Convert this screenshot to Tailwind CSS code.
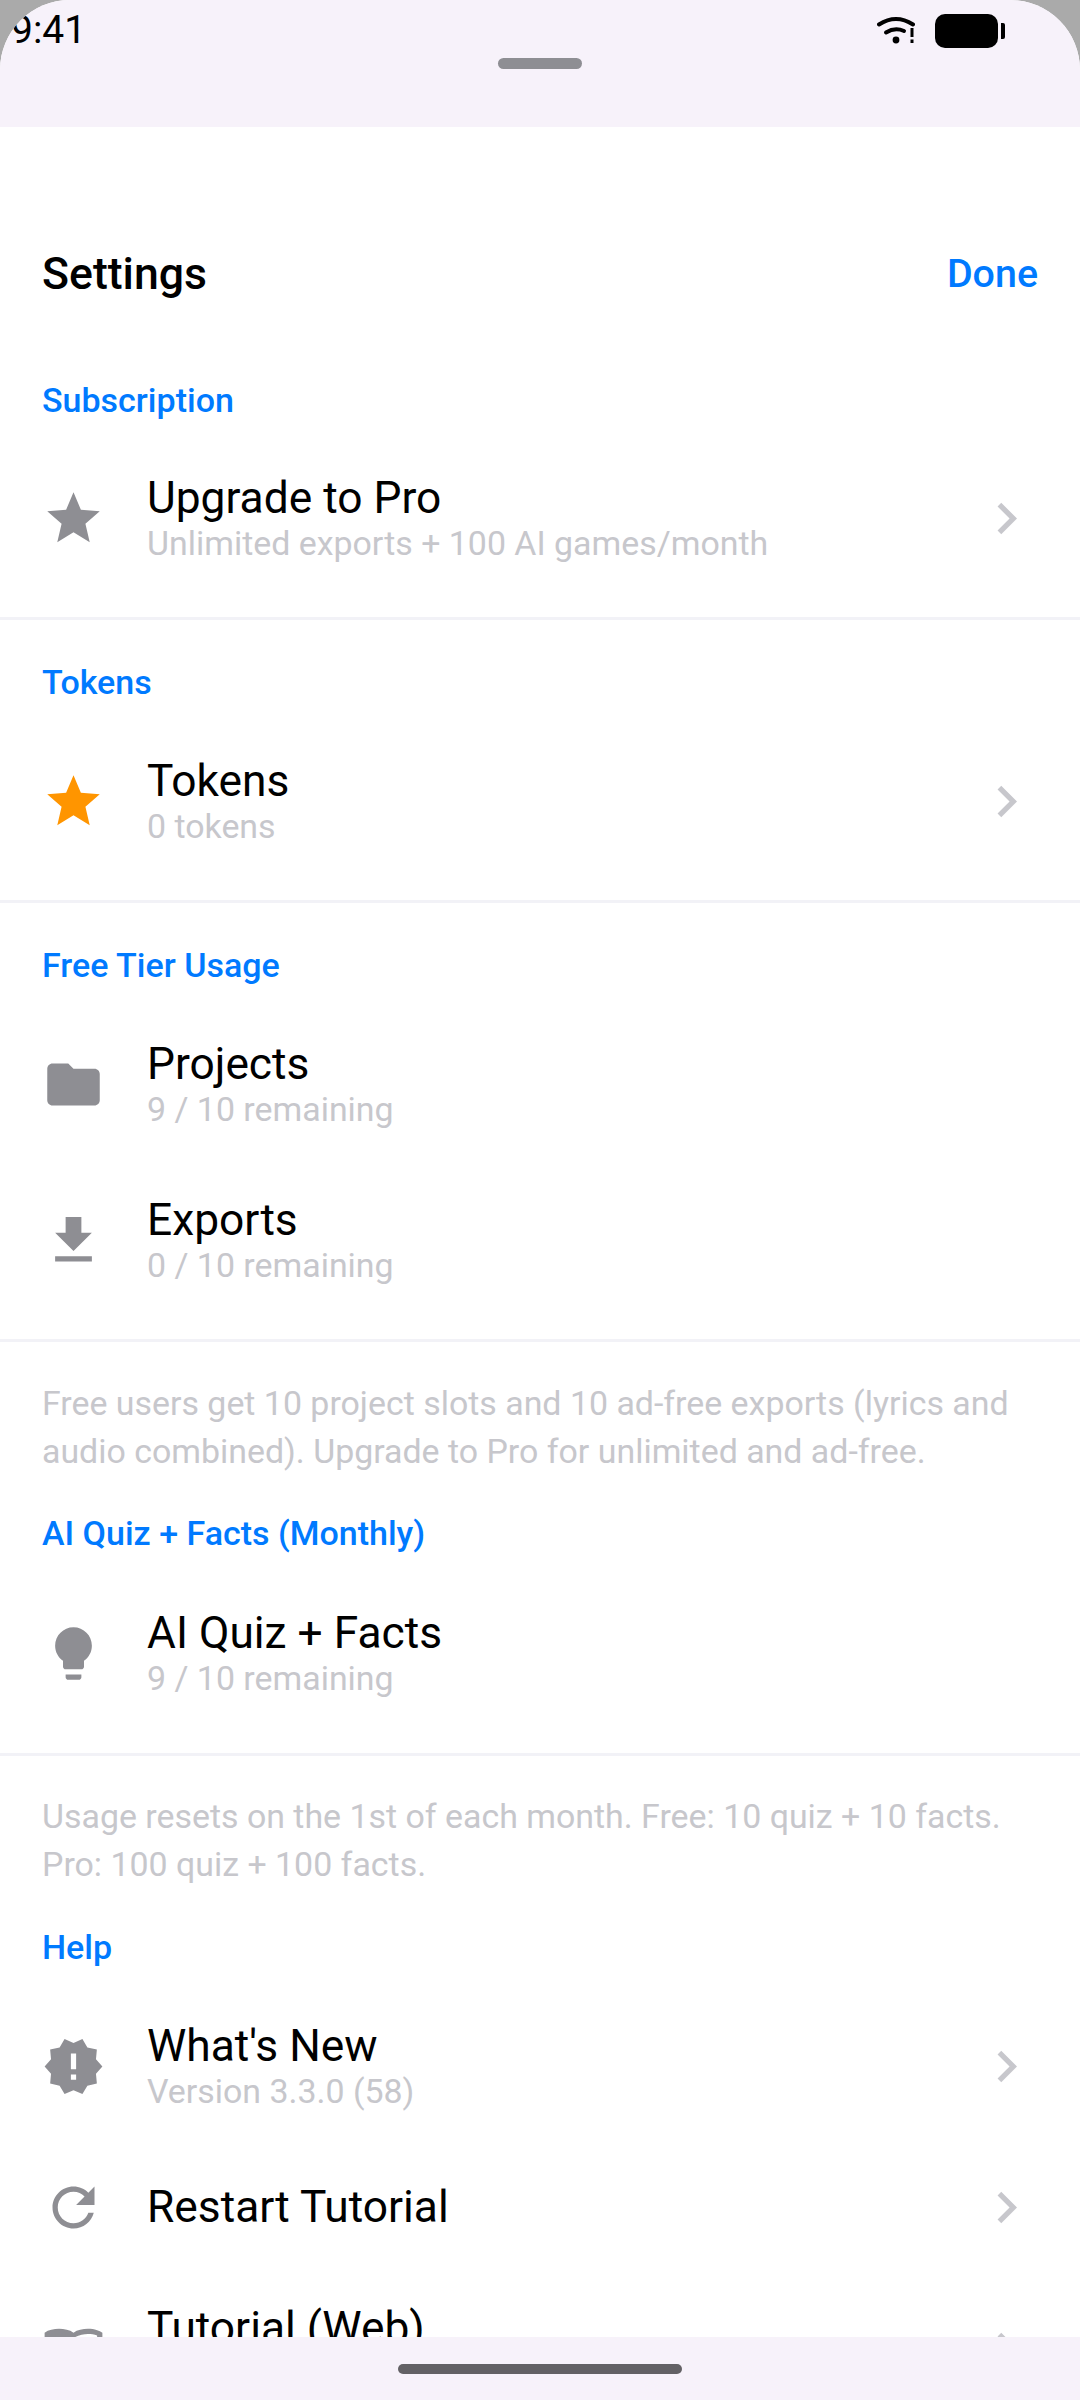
<!DOCTYPE html>
<html lang="en">
<head>
    <meta charset="UTF-8">
    <meta name="viewport" content="width=device-width, initial-scale=1.0">
    <title>Settings</title>
    <script src="https://cdn.jsdelivr.net/npm/@tailwindcss/browser@4"></script>
</head>
<body class="bg-[#aaaaaa] font-['Roboto',sans-serif]">
    <div class="h-[2400px] w-[1080px] flex flex-col overflow-hidden rounded-t-[70px] bg-white">
        <!-- Status bar + sheet handle -->
        <div class="relative h-[127px] shrink-0 bg-[#f7f2fa]">
            <div class="flex items-start justify-between pl-[11px] pr-[75px] pt-[8px]">
                <span class="text-[39px] leading-[44px] text-black">9:41</span>
                <div class="flex items-start gap-[20px] pt-[6px]">
                    <svg class="mt-[1px] w-[38px] h-[30px]" viewBox="0 0 38 30" fill="none">
                        <path d="M2 9.5Q19 -1.5 36 9.5" stroke="#000" stroke-width="4" stroke-linecap="round"/>
                        <path d="M9 17.5Q18 12 27 16" stroke="#000" stroke-width="4" stroke-linecap="round"/>
                        <circle cx="19" cy="25" r="3.4" fill="#000"/>
                        <rect x="33.5" y="13" width="3" height="9" fill="#000"/>
                        <rect x="33.5" y="24.5" width="3" height="3.5" fill="#000"/>
                    </svg>
                    <div class="flex items-center gap-[3px]">
                        <div class="w-[63px] h-[34px] rounded-[10px] bg-black"></div>
                        <div class="w-[4px] h-[16px] rounded-r-[2px] bg-black"></div>
                    </div>
                </div>
            </div>
            <div class="absolute left-[498px] top-[58px] w-[84px] h-[11px] rounded-full bg-[#8e8e93]"></div>
        </div>

        <!-- Scroll content -->
        <div class="flex-1 overflow-hidden bg-white">
            <div class="flex items-center justify-between px-[42px] pt-[122px] pb-[80px]">
                <h1 class="text-[44.6px] leading-[50px] font-medium text-black">Settings</h1>
                <button class="text-[39.4px] leading-[50px] font-medium text-[#007aff]">Done</button>
            </div>

            <!-- Subscription -->
            <div class="px-[42px] h-[42px] mb-[19px] text-[34px] leading-[42px] font-medium text-[#007aff]">Subscription</div>
            <div class="h-[156px] flex items-center pl-[42px] pr-[42px]">
                <svg class="w-[63px] h-[63px] shrink-0 fill-[#8e8e93]" viewBox="0 0 24 24"><path d="M12 17.27L18.18 21l-1.64-7.03L22 9.24l-7.19-.61L12 2 9.19 8.63 2 9.24l5.46 4.73L5.82 21z"/></svg>
                <div class="flex-1 ml-[42px]">
                    <div class="text-[44.3px] leading-[52px] text-black">Upgrade to Pro</div>
                    <div class="text-[33.9px] leading-[40px] text-[#c7c7cc]">Unlimited exports + 100 AI games/month</div>
                </div>
                <svg class="w-[63px] h-[63px] shrink-0 fill-[#c7c7cc]" viewBox="0 0 24 24"><path d="M10 6L8.59 7.41 13.17 12l-4.58 4.59L10 18l6-6z"/></svg>
            </div>
            <div class="mt-[21px] h-[3px] bg-[#f2f2f7]"></div>

            <!-- Tokens -->
            <div class="px-[42px] mt-[41px] h-[42px] mb-[20px] text-[34px] leading-[42px] font-medium text-[#007aff]">Tokens</div>
            <div class="h-[156px] flex items-center pl-[42px] pr-[42px]">
                <svg class="w-[63px] h-[63px] shrink-0 fill-[#ff9500]" viewBox="0 0 24 24"><path d="M12 17.27L18.18 21l-1.64-7.03L22 9.24l-7.19-.61L12 2 9.19 8.63 2 9.24l5.46 4.73L5.82 21z"/></svg>
                <div class="flex-1 ml-[42px]">
                    <div class="text-[44.3px] leading-[52px] text-black">Tokens</div>
                    <div class="text-[33.9px] leading-[40px] text-[#c7c7cc]">0 tokens</div>
                </div>
                <svg class="w-[63px] h-[63px] shrink-0 fill-[#c7c7cc]" viewBox="0 0 24 24"><path d="M10 6L8.59 7.41 13.17 12l-4.58 4.59L10 18l6-6z"/></svg>
            </div>
            <div class="mt-[21px] h-[3px] bg-[#f2f2f7]"></div>

            <!-- Free Tier Usage -->
            <div class="px-[42px] mt-[41px] h-[42px] mb-[20px] text-[34px] leading-[42px] font-medium text-[#007aff]">Free Tier Usage</div>
            <div class="h-[156px] flex items-center pl-[42px] pr-[42px]">
                <svg class="w-[63px] h-[63px] shrink-0 fill-[#8e8e93]" viewBox="0 0 24 24"><path d="M10 4H4c-1.1 0-1.99.9-1.99 2L2 18c0 1.1.9 2 2 2h16c1.1 0 2-.9 2-2V8c0-1.1-.9-2-2-2h-8l-2-2z"/></svg>
                <div class="flex-1 ml-[42px]">
                    <div class="text-[44.3px] leading-[52px] text-black">Projects</div>
                    <div class="text-[33.9px] leading-[40px] text-[#c7c7cc]">9 / 10 remaining</div>
                </div>
            </div>
            <div class="h-[156px] flex items-center pl-[42px] pr-[42px]">
                <svg class="w-[63px] h-[63px] shrink-0 fill-[#8e8e93]" viewBox="0 0 24 24"><path d="M19 9h-4V3H9v6H5l7 7 7-7zM5 18v2h14v-2H5z"/></svg>
                <div class="flex-1 ml-[42px]">
                    <div class="text-[44.3px] leading-[52px] text-black">Exports</div>
                    <div class="text-[33.9px] leading-[40px] text-[#c7c7cc]">0 / 10 remaining</div>
                </div>
            </div>
            <div class="mt-[21px] h-[3px] bg-[#f2f2f7]"></div>
            <p class="px-[42px] pt-[38px] text-[33.9px] leading-[48px] text-[#c7c7cc]">Free users get 10 project slots and 10 ad-free exports (lyrics and audio combined). Upgrade to Pro for unlimited and ad-free.</p>

            <!-- AI Quiz + Facts -->
            <div class="px-[42px] mt-[36px] h-[42px] mb-[21px] text-[34px] leading-[42px] font-medium text-[#007aff]">AI Quiz + Facts (Monthly)</div>
            <div class="h-[156px] flex items-center pl-[42px] pr-[42px]">
                <svg class="w-[63px] h-[63px] shrink-0 fill-[#8e8e93]" viewBox="0 0 24 24"><path d="M9 21c0 .55.45 1 1 1h4c.55 0 1-.45 1-1v-1H9v1zm3-19C8.14 2 5 5.14 5 9c0 2.38 1.19 4.47 3 5.74V17c0 .55.45 1 1 1h6c.55 0 1-.45 1-1v-2.26c1.81-1.27 3-3.36 3-5.74 0-3.86-3.14-7-7-7z"/></svg>
                <div class="flex-1 ml-[42px]">
                    <div class="text-[44.3px] leading-[52px] text-black">AI Quiz + Facts</div>
                    <div class="text-[33.9px] leading-[40px] text-[#c7c7cc]">9 / 10 remaining</div>
                </div>
            </div>
            <div class="mt-[22px] h-[3px] bg-[#f2f2f7]"></div>
            <p class="px-[42px] pt-[37px] text-[33.9px] leading-[48px] text-[#c7c7cc]">Usage resets on the 1st of each month. Free: 10 quiz + 10 facts. Pro: 100 quiz + 100 facts.</p>

            <!-- Help -->
            <div class="px-[42px] mt-[37px] h-[42px] mb-[20px] text-[34px] leading-[42px] font-medium text-[#007aff]">Help</div>
            <div class="h-[156px] flex items-center pl-[42px] pr-[42px]">
                <svg class="w-[63px] h-[63px] shrink-0 fill-[#8e8e93]" viewBox="0 0 24 24"><path d="M23 12l-2.44-2.78.34-3.68-3.61-.82-1.89-3.18L12 3 8.6 1.54 6.71 4.72l-3.61.81.34 3.68L1 12l2.44 2.78-.34 3.69 3.61.82 1.89 3.18L12 21l3.4 1.47 1.89-3.18 3.61-.82-.34-3.68L23 12zm-10 5h-2v-2h2v2zm0-4h-2V7h2v6z"/></svg>
                <div class="flex-1 ml-[42px]">
                    <div class="text-[44.3px] leading-[52px] text-black">What's New</div>
                    <div class="text-[33.9px] leading-[40px] text-[#c7c7cc]">Version 3.3.0 (58)</div>
                </div>
                <svg class="w-[63px] h-[63px] shrink-0 fill-[#c7c7cc]" viewBox="0 0 24 24"><path d="M10 6L8.59 7.41 13.17 12l-4.58 4.59L10 18l6-6z"/></svg>
            </div>
            <div class="h-[126px] flex items-center pl-[42px] pr-[42px]">
                <svg class="w-[63px] h-[63px] shrink-0 fill-[#8e8e93]" viewBox="0 0 24 24"><path d="M17.65 6.35C16.2 4.9 14.21 4 12 4c-4.42 0-7.99 3.58-7.99 8s3.57 8 7.99 8c3.73 0 6.84-2.55 7.73-6h-2.08c-.82 2.33-3.04 4-5.65 4-3.31 0-6-2.69-6-6s2.69-6 6-6c1.66 0 3.14.69 4.22 1.78L13 11h7V4l-2.35 2.35z"/></svg>
                <div class="flex-1 ml-[42px] text-[44.3px] leading-[52px] text-black">Restart Tutorial</div>
                <svg class="w-[63px] h-[63px] shrink-0 fill-[#c7c7cc]" viewBox="0 0 24 24"><path d="M10 6L8.59 7.41 13.17 12l-4.58 4.59L10 18l6-6z"/></svg>
            </div>
            <div class="h-[156px] flex items-center pl-[42px] pr-[42px]">
                <svg class="w-[63px] h-[63px] shrink-0 fill-[#8e8e93]" viewBox="0 0 24 24"><path d="M21 5c-1.11-.35-2.33-.5-3.5-.5-1.95 0-4.05.4-5.5 1.5-1.45-1.1-3.55-1.5-5.5-1.5S2.45 4.9 1 6v14.65c0 .25.25.5.5.5.1 0 .15-.05.25-.05C3.1 20.45 5.05 20 6.5 20c1.95 0 4.05.4 5.5 1.5 1.35-.85 3.8-1.5 5.5-1.5 1.65 0 3.35.3 4.75 1.05.1.05.15.05.25.05.25 0 .5-.25.5-.5V6c-.6-.45-1.25-.75-2-1zm0 13.5c-1.1-.35-2.3-.5-3.5-.5-1.7 0-4.15.65-5.5 1.5V8c1.35-.85 3.8-1.5 5.5-1.5 1.2 0 2.4.15 3.5.5v11.5z"/></svg>
                <div class="flex-1 ml-[42px]">
                    <div class="text-[44.3px] leading-[52px] text-black">Tutorial (Web)</div>
                    <div class="h-[40px]"></div>
                </div>
                <svg class="w-[63px] h-[63px] shrink-0 fill-[#c7c7cc]" viewBox="0 0 24 24"><path d="M10 6L8.59 7.41 13.17 12l-4.58 4.59L10 18l6-6z"/></svg>
            </div>
        </div>

        <!-- Home indicator -->
        <div class="h-[63px] shrink-0 flex items-center justify-center bg-[#f7f2fa]">
            <div class="w-[284px] h-[10px] rounded-full bg-[#636165]"></div>
        </div>
    </div>
</body>
</html>
